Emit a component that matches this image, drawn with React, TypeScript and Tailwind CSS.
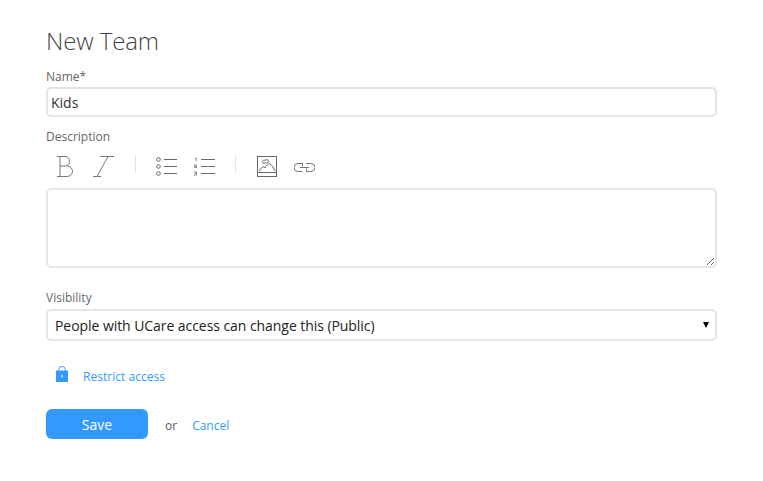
import React from 'react';

const Divider = () => <div className="w-px h-[18px] bg-[#e6e6e6] mt-[-4px]" />;

function Toolbar() {
  return (
    <div className="flex items-center h-7 text-[#666]">
      {/* bold */}
      <svg width="16" height="21" viewBox="0 0 16 21" fill="none" stroke="#777" strokeWidth="1" className="ml-[11px] mt-[1px]">
        <path d="M0 .5h8c3 0 4.500 2 4.500 4.700S11 10 8 10H3M3 .5v20M0 20.500h10c3 0 5.500-2.200 5.500-5.200S13 10 10 10" />
      </svg>
      {/* italic */}
      <svg width="21" height="21" viewBox="0 0 21 21" fill="none" stroke="#777" strokeWidth="1" className="ml-[20px] mt-[1px]">
        <path d="M7 .5h14M15 .5 4 20.500M0 20.500h8" />
      </svg>
      <div className="ml-[21px]"><Divider /></div>
      {/* bullet list */}
      <svg width="21" height="19" viewBox="0 0 21 19" fill="none" stroke="#666" strokeWidth="1" className="ml-[20px] mt-[1px]">
        <circle cx="2.500" cy="2.500" r="1.800" />
        <circle cx="2.500" cy="9.500" r="1.800" />
        <circle cx="2.500" cy="16.500" r="1.800" />
        <path d="M8 2.500h13M8 9.500h13M8 16.500h13" />
      </svg>
      {/* numbered list */}
      <svg width="21" height="19" viewBox="0 0 21 19" fill="none" stroke="#666" strokeWidth="1" className="ml-[17px] mt-[1px]">
        <path d="M1 1.500 2 1v3M0 8h2.500v1.200H.5v1.300h2.500M0 15h2.500v1.200H1M2.500 16.200V18H0" strokeWidth="0.800" />
        <path d="M7 2.500h14M7 9.500h14M7 16.500h14" />
      </svg>
      <div className="ml-[20px]"><Divider /></div>
      {/* image */}
      <svg width="20" height="21" viewBox="0 0 20 21" fill="none" stroke="#666" strokeWidth="1" className="ml-[21px] mt-[1px]">
        <rect x="0.500" y="0.500" width="19" height="20" />
        <path d="M0.500 16.500h19M2.500 15c1.500-3.500 3.500-5.500 5.500-3 1.500-2.500 3-4.500 5-4 2 1 3.500 4 5 7" />
        <path d="M6 7c-1.500-1.500.5-3.500 2-2.500.8-1.500 3.500-1 3.500 1 0 1.200-1 1.500-2 1.500z" />
      </svg>
      {/* link */}
      <svg width="21" height="9" viewBox="0 0 21 9" fill="none" stroke="#777" strokeWidth="1" className="ml-[17px] mt-[2px]">
        <path d="M9 .5H4a4 4 0 0 0 0 8h4.500M12 .5h5a4 4 0 0 1 0 8h-4.500M6 4.500h9M8.500 .5v3M12.500 5.500v3" />
      </svg>
    </div>
  );
}

export default function App() {
  return (
    <div className="w-[763px] h-[481px] bg-white px-[46px] pt-[25px] font-['Open_Sans',sans-serif] text-[#333]">
      <h1 className="text-[24px] leading-[32px] font-light tracking-[-0.1px] text-[#444]">New Team</h1>

      <label className="block text-[12px] leading-[16px] text-[#666] mt-[12px]">Name*</label>
      <input
        defaultValue="Kids"
        className="block w-full h-[30px] mt-[2px] px-[3px] border-2 border-[#e5e5e5] rounded-[5px] text-[14px] text-[#333] outline-none"
      />

      <label className="block text-[12px] leading-[16px] text-[#666] mt-[12px]">Description</label>
      <div className="mt-[7px]"><Toolbar /></div>
      <textarea className="block w-full h-[80px] mt-[8px] border-2 border-[#e5e5e5] rounded-[5px] outline-none" />

      <label className="block text-[12px] leading-[16px] text-[#666] mt-[22px]">Visibility</label>
      <div className="relative mt-[3px]">
        <select className="block w-full h-[32px] px-[7px] appearance-none bg-white border-2 border-[#e5e5e5] rounded-[5px] text-[14px] tracking-[-0.06px] text-[#222] outline-none">
          <option>People with UCare access can change this (Public)</option>
        </select>
        <span className="absolute right-[8px] top-[13px] w-0 h-0 border-x-[3px] border-t-[6px] border-x-transparent border-t-black" />
      </div>

      <div className="flex items-center mt-[24px] h-[24px]">
        <svg width="12" height="16" viewBox="0 0 12 16" className="ml-[10px] mt-[-6px]">
          <path d="M2.700 5V3.500a3.300 3 0 0 1 6.600 0V5" fill="none" stroke="#3399ff" strokeWidth="1" />
          <path fillRule="evenodd" d="M0 4.500h12V16H0zM5.400 9v2.500h1.200V9z" fill="#3399ff" />
        </svg>
        <a className="ml-[15px] text-[12px] tracking-[0.03px] text-[#3399ff]">Restrict access</a>
      </div>

      <div className="flex items-center mt-[20px]">
        <button className="w-[102px] h-[30px] rounded-[6px] bg-[#3399ff] text-white text-[14px] font-medium">Save</button>
        <span className="ml-[17px] mt-[3px] text-[12px] text-[#555]">or</span>
        <a className="ml-[15px] mt-[3px] text-[12px] text-[#3399ff]">Cancel</a>
      </div>
    </div>
  );
}
